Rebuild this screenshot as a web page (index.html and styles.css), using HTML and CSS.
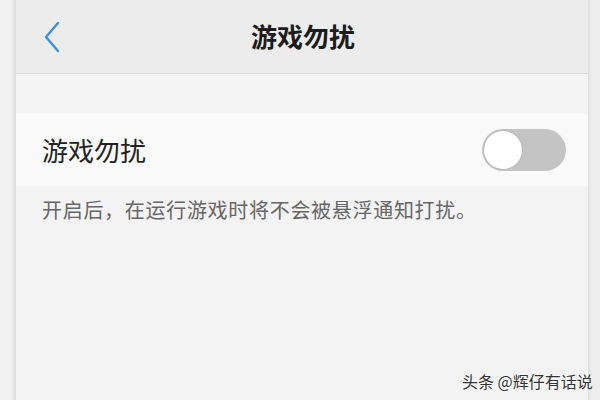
FILE: index.html
```html
<!DOCTYPE html>
<html lang="zh-CN">
<head>
    <meta charset="UTF-8">
    <meta name="viewport" content="width=device-width, initial-scale=1.0">
    <title>游戏勿扰</title>
    <link rel="stylesheet" href="styles.css">
</head>
<body>
    <div class="edge edge-left"></div>

    <div class="screen">
        <header class="nav">
            <span class="back">
                <svg width="18" height="32" viewBox="0 0 18 32">
                    <path d="M15 2 L3 16 L15 30" fill="none" stroke="#3d8fd8" stroke-width="2.4" stroke-linecap="round" stroke-linejoin="round"/>
                </svg>
            </span>
            <h1 class="nav-title">游戏勿扰</h1>
        </header>

        <div class="spacer"></div>

        <div class="setting-row">
            <span class="setting-label">游戏勿扰</span>
            <span class="switch"><span class="knob"></span></span>
        </div>

        <p class="hint">开启后，在运行游戏时将不会被悬浮通知打扰。</p>
    </div>

    <div class="edge edge-right"></div>

    <div class="watermark">头条 @辉仔有话说</div>
</body>
</html>
```

FILE: styles.css
```css
* {
    margin: 0;
    padding: 0;
    box-sizing: border-box;
}

body {
    width: 600px;
    height: 400px;
    overflow: hidden;
    display: flex;
    background: #f3f3f3;
    font-family: "Noto Sans CJK SC", "Noto Sans", sans-serif;
    color: #222;
    position: relative;
}

.edge {
    height: 100%;
}

.edge-left {
    width: 16px;
    background: linear-gradient(to right, #f4f4f4 0, #f1f1f1 11px, #dcdcdc 16px);
}

.edge-right {
    width: 12px;
    background: linear-gradient(to right, #dedede 0, #ececec 3px, #efefef 12px);
}

.screen {
    flex: 1;
    display: flex;
    flex-direction: column;
    background: #f3f3f3;
}

.nav {
    height: 74px;
    background: #ececec;
    border-bottom: 1px solid #d9d9d9;
    display: flex;
    align-items: center;
    justify-content: center;
    position: relative;
}

.back {
    position: absolute;
    left: 27px;
    top: 21px;
    display: flex;
}

.nav-title {
    font-size: 26px;
    font-weight: 700;
    color: #1c1c1c;
    margin-top: -3px;
    margin-left: 2px;
}

.spacer {
    height: 39px;
    background: #f4f4f4;
}

.setting-row {
    height: 73px;
    background: #f9f9f9;
    display: flex;
    align-items: center;
    justify-content: space-between;
    padding: 0 22px 0 26px;
}

.setting-label {
    font-size: 26px;
    color: #222;
}

.switch {
    width: 84px;
    height: 42px;
    border-radius: 21px;
    background: #c4c4c4;
    padding: 2px;
    display: flex;
}

.knob {
    width: 38px;
    height: 38px;
    border-radius: 50%;
    background: #fff;
    box-shadow: 0 0 2px rgba(0, 0, 0, 0.18);
}

.hint {
    padding: 9px 0 0 26px;
    font-size: 20px;
    letter-spacing: 0.7px;
    color: #666;
}

.watermark {
    position: absolute;
    left: 462px;
    top: 369px;
    font-size: 16px;
    color: #333;
    text-shadow: 0 0 2px #fff, 0 0 2px #fff;
}
```
